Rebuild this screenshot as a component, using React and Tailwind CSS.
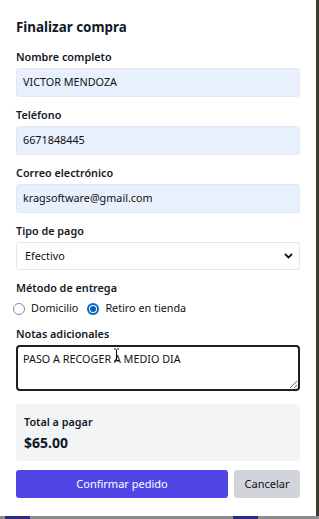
import React from "react";

const font = { fontFamily: '"Noto Sans", "Open Sans", sans-serif' };

function Label({ children, className = "" }) {
  return (
    <div className={"h-4 text-[10.8px] leading-4 font-semibold text-[#111827] mb-[3px] " + className}>
      {children}
    </div>
  );
}

function Filled({ children }) {
  return (
    <div className="h-[29px] rounded-[3px] bg-[#e8f0fe] border border-[#e1e8f5] px-[6px] flex items-center text-[10.8px] text-[#111]">
      {children}
    </div>
  );
}

export default function App() {
  return (
    <div className="w-[319px] h-[519px] bg-[#3b3a33] flex flex-col overflow-hidden" style={font}>
      <div className="flex h-[516px]">
        <div className="w-[316px] h-[516px] bg-white px-4 pt-[17px] flex flex-col">
          <div className="h-5 leading-5 text-[13.4px] font-bold text-[#111827] mb-3">Finalizar compra</div>

          <Label>Nombre completo</Label>
          <Filled>VICTOR MENDOZA</Filled>

          <Label className="mt-[10px]">Teléfono</Label>
          <Filled>6671848445</Filled>

          <Label className="mt-[10px]">Correo electrónico</Label>
          <Filled>kragsoftware@gmail.com</Filled>

          <Label className="mt-[10px]">Tipo de pago</Label>
          <div className="h-[28px] rounded-[3px] bg-white border border-[#e5e7eb] pl-[8px] pr-[5px] flex items-center justify-between text-[10.8px] text-[#111]">
            <span>Efectivo</span>
            <svg width="9" height="6" viewBox="0 0 9 6" className="mr-[1px]">
              <path d="M1 1 L4.5 4.5 L8 1" fill="none" stroke="#111" strokeWidth="1.8" />
            </svg>
          </div>

          <Label className="mt-[10px]">Método de entrega</Label>
          <div className="h-[19px] flex items-center text-[10.8px] text-[#111]">
            <span className="w-[12px] h-[12px] rounded-full border border-[#8a8f98] -ml-[3px] mr-[6px]" />
            <span>Domicilio</span>
            <span className="w-[12px] h-[12px] rounded-full bg-[#0067c0] ml-[9px] mr-[6px] flex items-center justify-center">
              <span className="w-[8px] h-[8px] rounded-full bg-white flex items-center justify-center">
                <span className="w-[6px] h-[6px] rounded-full bg-[#0067c0]" />
              </span>
            </span>
            <span>Retiro en tienda</span>
          </div>

          <Label className="mt-[8px]">Notas adicionales</Label>
          <div className="relative">
            <textarea
              readOnly
              defaultValue="PASO A RECOGER A MEDIO DIA"
              className="block w-full h-[46px] rounded-[4px] border-2 border-[#1f1f1f] px-[5px] pt-[4px] text-[10.8px] text-[#111] leading-[16px] outline-none resize-y"
              style={font}
            />
            <svg className="absolute left-[97px] top-[3px]" width="7" height="14" viewBox="0 0 7 14">
              <path d="M1 1 H3 M4 1 H6 M3.5 1.5 V12.5 M1 13 H3 M4 13 H6" stroke="#111" strokeWidth="1" fill="none" />
            </svg>
          </div>

          <div className="mt-[13px] h-[57px] rounded-[4px] bg-[#f3f4f6] px-2 pt-[10px]">
            <div className="h-4 leading-4 text-[10.8px] font-semibold text-[#111827]">Total a pagar</div>
            <div className="mt-[3px] h-5 leading-5 text-[14px] font-bold text-[#111827]">$65.00</div>
          </div>

          <div className="mt-[9px] flex gap-[6px]">
            <div className="w-[212px] h-[28px] rounded-[3px] bg-[#4f46e5] text-white text-[11px] flex items-center justify-center">
              Confirmar pedido
            </div>
            <div className="flex-1 h-[28px] rounded-[3px] bg-[#d1d5db] text-[#111] text-[11px] flex items-center justify-center">
              Cancelar
            </div>
          </div>
        </div>
        <div className="flex-1 bg-[#3d3b30]" />
      </div>
      <div className="h-[3px] bg-[#8c8c8c] flex">
        <div className="ml-[5px] w-[25px] h-[3px] bg-[#2e2a82]" />
        <div className="ml-[203px] w-[25px] h-[3px] bg-[#2e2a82]" />
      </div>
    </div>
  );
}
